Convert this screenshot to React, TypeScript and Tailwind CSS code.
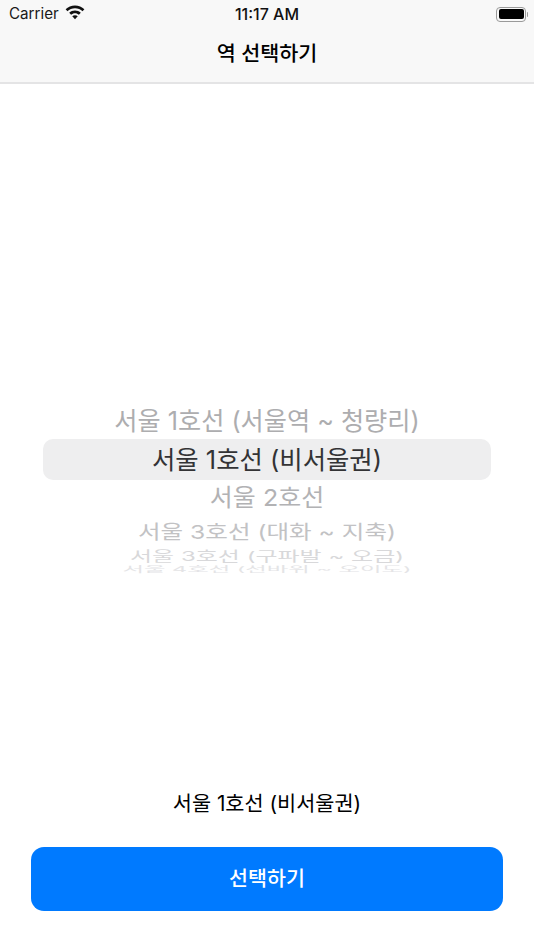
const rows = [
  { label: '서울 1호선 (비서울권)', box: 'h-[41px] mx-[43px] rounded-[10px] bg-[#eeeeef]', text: 'text-[25.4px] text-[#333335]' },
  { label: '서울 2호선', box: 'h-[34px]', text: 'text-[25px] text-[#b2b2b4] scale-y-[0.94]' },
  { label: '서울 3호선 (대화 ~ 지축)', box: 'h-[34px]', text: 'text-[24.6px] text-[#c2c2c4] scale-y-[0.77]' },
  { label: '서울 3호선 (구파발 ~ 오금)', box: 'h-[16px]', text: 'text-[24px] text-[#d8d8da] scale-y-[0.55]' },
  { label: '서울 4호선 (선바위 ~ 오이도)', box: 'h-[10px]', text: 'text-[23.4px] text-[#e4e4e6] scale-y-[0.32]' },
];

function WifiIcon() {
  return (
    <svg width="20" height="15" viewBox="0 0 19 14" aria-hidden>
      <path d="M9.5 0.4C6 0.4 2.9 1.8 0.6 4l1.7 1.9C4.2 4.1 6.7 3 9.5 3s5.3 1.1 7.2 2.9L18.4 4C16.1 1.8 13 0.4 9.5 0.4z" fill="#111" />
      <path d="M9.5 5C7.4 5 5.5 5.8 4 7.2l1.8 1.9C6.8 8.2 8.1 7.6 9.5 7.6s2.7.6 3.7 1.5L15 7.2C13.5 5.8 11.6 5 9.5 5z" fill="#111" />
      <path d="M9.5 9.5c-1 0-1.9.4-2.6 1l2.6 2.9 2.6-2.9c-.7-.6-1.6-1-2.6-1z" fill="#111" />
    </svg>
  );
}

function BatteryIcon() {
  return (
    <div className="flex items-center gap-px">
      <div className="h-[15px] w-[30px] rounded-[4px] border border-[#9a9a9a] p-[1.5px]">
        <div className="h-full w-full rounded-[2px] bg-black" />
      </div>
      <div className="h-[5px] w-px rounded-r-sm bg-[#9a9a9a]" />
    </div>
  );
}

export default function App() {
  return (
    <div className="flex h-[950px] w-[534px] flex-col overflow-hidden bg-white font-['Inter','Noto_Sans_CJK_KR',sans-serif]">
      <header className="h-[84px] shrink-0 border-b-2 border-[#e4e4e5] bg-[#f8f8f8]">
        <div className="flex h-[28px] items-center justify-between pl-[9px] pr-[6px]">
          <div className="flex w-[120px] items-center gap-[6px] text-[15.2px] text-[#1a1a1a]">
            Carrier
            <span className="-mt-[3px]">
              <WifiIcon />
            </span>
          </div>
          <div className="-ml-[3px] text-[16px] font-medium text-[#111]">11:17 AM</div>
          <div className="flex w-[120px] justify-end">
            <BatteryIcon />
          </div>
        </div>
        <h1 className="mt-[1px] text-center text-[20.7px] leading-[50px] font-medium text-black">역 선택하기</h1>
      </header>

      <main className="flex-1 pt-[318px]">
        <div className="flex h-[37px] translate-y-px items-center justify-center text-[25.2px] whitespace-nowrap text-[#adadaf]">
          서울 1호선 (서울역 ~ 청량리)
        </div>
        {rows.map((row) => (
          <div key={row.label} className={`flex items-center justify-center overflow-hidden whitespace-nowrap ${row.box}`}>
            <span className={`block translate-y-px ${row.text}`}>{row.label}</span>
          </div>
        ))}
      </main>

      <footer className="shrink-0 px-[31px] pb-[39px]">
        <p className="translate-y-px text-center text-[20.8px] leading-[30px] text-black">서울 1호선 (비서울권)</p>
        <button className="mt-[29px] h-[64px] w-full rounded-[13px] bg-[#007aff] pt-px text-[20.6px] font-medium text-white">
          선택하기
        </button>
      </footer>
    </div>
  );
}
